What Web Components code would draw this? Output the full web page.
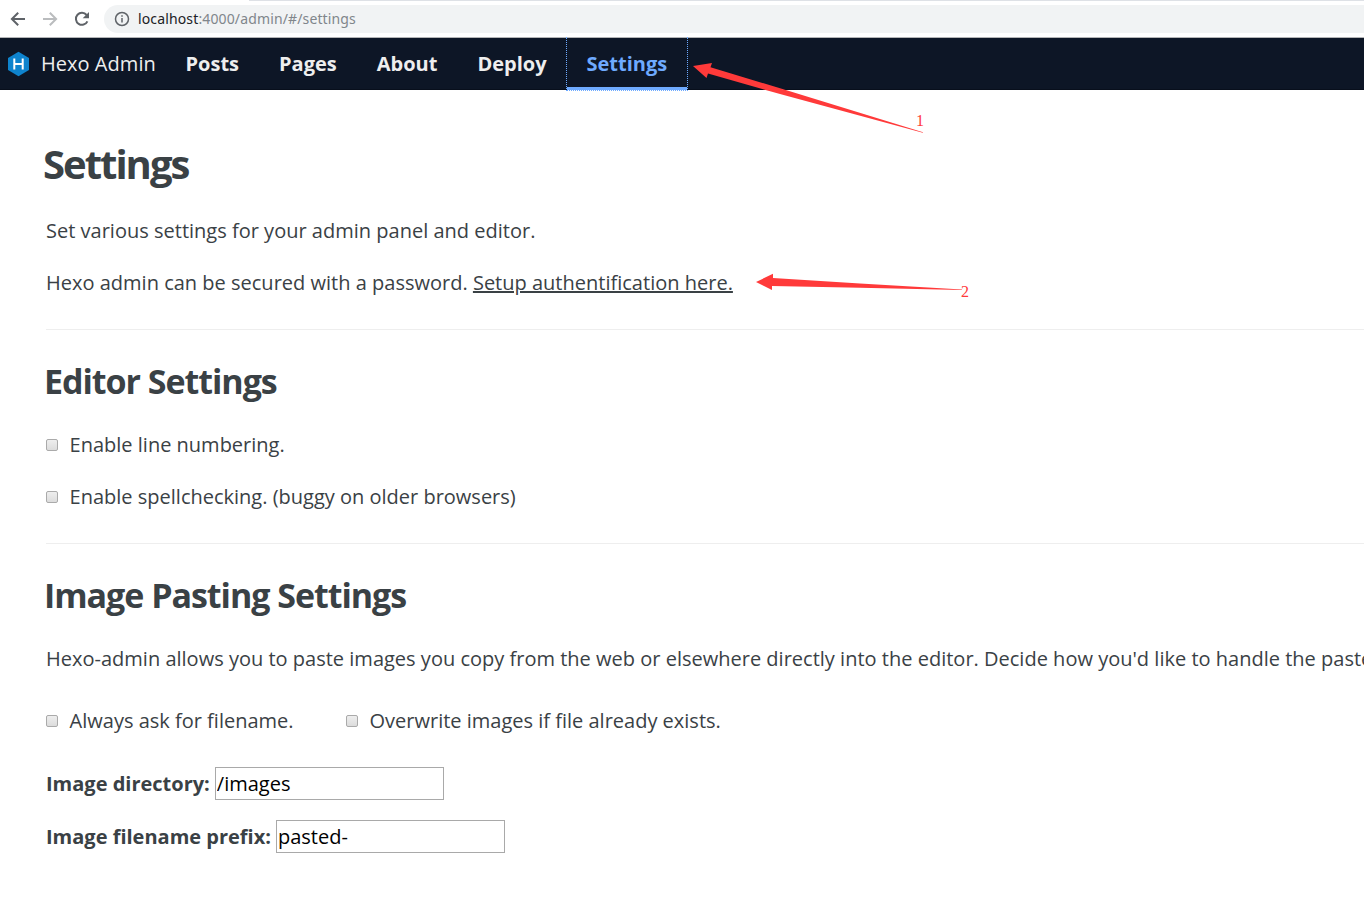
<!DOCTYPE html>
<html lang="en">
<head>
<meta charset="utf-8">
<title>Hexo Admin</title>
<style>
html,body{margin:0;padding:0;background:#fff}
body{width:100%;height:918px;overflow:hidden;font-family:"Open Sans",sans-serif;color:#3a4145}
</style>
</head>
<body>
<settings-screen></settings-screen>
<script>
const define = (name, html, setup) => customElements.define(name, class extends HTMLElement {
  connectedCallback() {
    if (this.shadowRoot) return;
    const t = document.createElement('template');
    t.innerHTML = html;
    this.attachShadow({mode: 'open'}).appendChild(t.content.cloneNode(true));
    if (setup) setup(this, this.shadowRoot);
  }
});

define('browser-bar', `
<style>
:host{display:flex;align-items:center;box-sizing:border-box;height:38px;background:linear-gradient(#dee1e6,#dee1e6) 249px 0/100% 1px no-repeat #fff;border-bottom:1px solid #b4b5b7;padding-left:8px}
svg{display:block;flex:none}
.back{margin-right:12px}.fwd{margin-right:12px}.reload{margin-right:12px}
.url{flex:1;height:28px;margin-top:1px;border-radius:14px 0 0 14px;background:#f1f3f4;display:flex;align-items:center;padding-left:8px;font:14px/28px "Open Sans",sans-serif;color:#80868b}
.url svg{margin-right:6px}
.text{font-family:"Noto Sans","Open Sans",sans-serif;font-size:14px;letter-spacing:.135px;white-space:nowrap}
b{font-weight:400;color:#202124}
</style>
<svg class="back" width="20" height="20" viewBox="0 0 20 20" fill="none" stroke="#5f6368" stroke-width="2"><path d="M17 10H4M10.2 3.7 3.9 10l6.3 6.3"/></svg>
<svg class="fwd" width="20" height="20" viewBox="0 0 20 20" fill="none" stroke="#babcbe" stroke-width="2"><path d="M3 10h13M9.800 3.700 16.100 10l-6.300 6.300"/></svg>
<svg class="reload" width="20" height="20" viewBox="0 0 20 20"><path d="M15.400 12.300A6 6 0 1 1 14.600 6" fill="none" stroke="#5f6368" stroke-width="2"/><path d="M17 3v6.300h-6.300z" fill="#5f6368"/></svg>
<div class="url"><svg width="20" height="20" viewBox="0 0 20 20"><circle cx="10" cy="10" r="6.500" fill="none" stroke="#5f6368" stroke-width="1.500"/><path d="M9.250 9h1.500v4.500h-1.500zM9.250 6.300h1.500v1.500h-1.500z" fill="#5f6368"/></svg><span class="text"><b>localhost</b>:4000/admin/#/settings</span></div>`);

define('nav-item', `
<style>
:host{display:block;box-sizing:border-box;height:52px;padding:0 20px;font-weight:700;font-size:20px;line-height:52px;color:#eee;white-space:nowrap}
:host([active]){color:#6eaaff;position:relative;box-shadow:inset 0 -3px #6eaaff}
:host([active])::after{content:"";position:absolute;inset:-1px -1px -1px -1px;border:1px dotted #6eaaff;border-top:0}
</style><slot></slot>`);

define('nav-bar', `
<style>
:host{display:flex;height:52px;background:#0d1626;box-shadow:inset 0 -1px #080f1c;padding-left:7px}
.brand{display:flex;align-items:center;color:#eee;font-size:20px;letter-spacing:.04px;line-height:52px;white-space:nowrap;width:158.500px}
svg{margin-right:11px;margin-top:-1px;flex:none}
</style>
<div class="brand"><svg width="23" height="26" viewBox="0 0 23 26"><path d="M11.500.8 22 6.900v12.200L11.500 25.200 1 19.100V6.900z" fill="#0e83cd"/><path d="M7.300 7.500v11M15.700 7.500v11M7.300 13h8.400" stroke="#fff" stroke-width="2" fill="none"/></svg><slot></slot></div>
<nav-item>Posts</nav-item><nav-item>Pages</nav-item><nav-item>About</nav-item><nav-item>Deploy</nav-item><nav-item active>Settings</nav-item>`);

define('check-option', `
<style>
:host{display:flex;align-items:center;height:32px;font-size:20px;line-height:32px;white-space:nowrap}
i{box-sizing:border-box;width:12px;height:12px;border:1px solid #aaa;border-radius:2px;background:linear-gradient(#eee,#dcdcdc);margin-right:11.600px;margin-top:-1px}
</style><i></i><slot></slot>`);

define('text-field', `
<style>
:host{display:flex;align-items:center;height:33px;font-size:20px}
label{font-weight:700;margin-right:5px;white-space:nowrap}
input{box-sizing:border-box;width:229px;height:33px;border:1px solid #a9a9a9;padding:1px;margin:0;font:20px "Open Sans",sans-serif;color:#000;background:#fff;outline:0;border-radius:0}
</style><label><slot></slot></label><input>`, (el, root) => { root.querySelector('input').value = el.getAttribute('value'); });

define('section-title', `
<style>
:host{display:block;font-weight:700;font-size:34px;line-height:46px;letter-spacing:-1.030px;margin:-1px 0 25px -2px;white-space:nowrap}
:host([main]){font-size:40px;line-height:54px;letter-spacing:-2px;margin:-1px 0 24px -3px}
</style><slot></slot>`);

define('red-mark', `
<style>
:host{position:absolute;left:0;top:0;pointer-events:none}
svg{display:block}
text{font:16px "Liberation Serif",serif;fill:#ff3a3a}
</style>
<svg width="1364" height="320" fill="#ff3a3a">
<path d="M693 66 712 63 710.500 67.200 785 89.800 923 132.200 922.800 132.800 780 94 708 73.500 706.500 78z"/>
<path d="M756 282 773 273.800V278L860 283.500 962 289.500V290L860 287.700 772 286V290z"/>
<text x="916" y="126">1</text><text x="961" y="297">2</text>
</svg>`);

define('settings-screen', `
<style>
:host{display:block;position:relative;height:918px;overflow:hidden}
main{display:flex;flex-direction:column;padding:48px 0 0 46px}
p{margin:0;font-size:20px;line-height:32px;letter-spacing:.008px;white-space:nowrap}
p+p,check-option+check-option{margin-top:20px}
a{color:inherit;text-decoration:underline}
hr{width:100%;height:1px;border:0;margin:30px 0 29px;background:#eee}
.row{display:flex;gap:52.400px;margin:30px 0}
.row check-option+check-option{margin-top:0}
text-field+text-field{margin-top:20px}
</style>
<browser-bar></browser-bar>
<nav-bar>Hexo Admin</nav-bar>
<main>
<section-title main>Settings</section-title>
<p>Set various settings for your admin panel and editor.</p>
<p>Hexo admin can be secured with a password. <a>Setup authentification here.</a></p>
<hr>
<section-title>Editor Settings</section-title>
<check-option>Enable line numbering.</check-option>
<check-option>Enable spellchecking. (buggy on older browsers)</check-option>
<hr>
<section-title>Image Pasting Settings</section-title>
<p>Hexo-admin allows you to paste images you copy from the web or elsewhere directly into the editor. Decide how you'd like to handle the pasted</p>
<div class="row"><check-option>Always ask for filename.</check-option><check-option>Overwrite images if file already exists.</check-option></div>
<text-field value="/images">Image directory:</text-field>
<text-field value="pasted-">Image filename prefix:</text-field>
</main>
<red-mark></red-mark>`);
</script>
</body>
</html>
